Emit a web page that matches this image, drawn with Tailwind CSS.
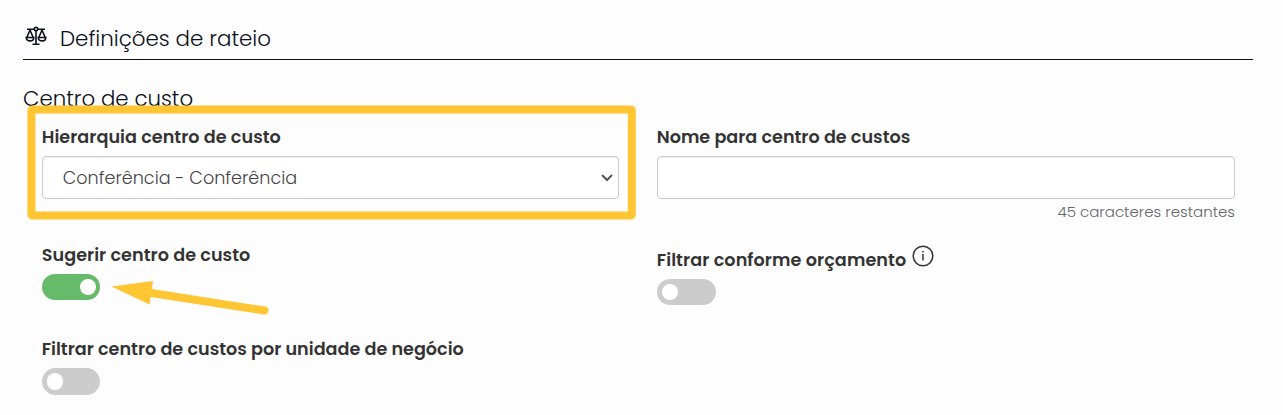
<!DOCTYPE html>
<html lang="pt-BR">
<head>
    <meta charset="UTF-8">
    <meta name="viewport" content="width=device-width, initial-scale=1.0">
    <title>Definições de rateio</title>
    <script src="https://cdn.jsdelivr.net/npm/@tailwindcss/browser@4"></script>
</head>
<body class="bg-[#fdfdfd] font-[Poppins,Inter,sans-serif] text-[#333] overflow-hidden">
    <div class="relative w-[1283px] h-[415px] pl-[23px] pr-[30px]">
        <!-- Cabeçalho -->
        <div class="flex items-center h-[60px] pt-[18px] border-b border-[#0b1020] text-[#0b1020]">
            <svg class="w-[22px] h-[20px] ml-0.5 -mt-1.5 shrink-0" viewBox="0 0 22 20" fill="none" stroke="currentColor" stroke-width="1.6">
                <path d="M2 3.2H9M13 3.2H20M11 5V18M7.5 18.2H14.5" />
                <circle cx="11" cy="3" r="1.7" />
                <path d="M5 4L1.6 12M5 4L8.4 12M17 4L13.6 12M17 4L20.4 12" />
                <path d="M1.2 11.5H8.8C8.8 16 1.2 16 1.2 11.5ZM13.2 11.5H20.8C20.8 16 13.2 16 13.2 11.5Z" />
            </svg>
            <h1 class="ml-[13px] text-[21.4px] leading-[32px] font-light whitespace-nowrap">Definições de rateio</h1>
        </div>

        <h2 class="mt-[23px] h-[41px] text-[21.3px] leading-[32px] font-light text-[#0b1020]">Centro de custo</h2>

        <!-- Campos -->
        <div class="grid grid-cols-2">
            <div class="px-[18.75px] h-[118px]">
                <label class="block h-8 leading-[26px] text-[17.6px] font-semibold tracking-[0.03px] whitespace-nowrap">Hierarquia centro de custo</label>
                <div class="flex items-center justify-between h-[43px] pl-5 pr-[5px] bg-white border border-[#ccc] rounded-[4px] shadow-[inset_0_1px_1px_rgba(0,0,0,0.075)]">
                    <span class="pt-px text-[17.6px] font-light text-[#444]">Conferência - Conferência</span>
                    <svg class="w-[12px] h-[8px]" viewBox="0 0 12 8" fill="none" stroke="#555" stroke-width="2">
                        <path d="M1 1L6 6L11 1" />
                    </svg>
                </div>
            </div>
            <div class="pl-[18.75px] pr-[18px] h-[118px]">
                <label class="block h-8 leading-[26px] text-[17.6px] font-semibold whitespace-nowrap">Nome para centro de custos</label>
                <div class="h-[43px] bg-white border border-[#ccc] rounded-[4px] shadow-[inset_0_1px_1px_rgba(0,0,0,0.075)]"></div>
                <p class="text-right text-[15px] leading-[26px] font-light text-[#666]">45 caracteres restantes</p>
            </div>

            <div class="px-[18.75px] h-[94px]">
                <label class="block h-8 leading-[26px] text-[17.6px] font-semibold tracking-[0.04px] whitespace-nowrap">Sugerir centro de custo</label>
                <div class="flex items-center justify-end w-[58px] h-[26px] px-[4px] rounded-full bg-[#66bb6a]">
                    <span class="w-4 h-4 rounded-full bg-white"></span>
                </div>
            </div>
            <div class="px-[18.75px] h-[94px]">
                <div class="flex h-[37px] pt-[5px]">
                    <label class="leading-[26px] text-[17.6px] font-semibold tracking-[0.08px] whitespace-nowrap">Filtrar conforme orçamento</label>
                    <svg class="w-[22px] h-[22px] ml-1.5 -mt-0.5" viewBox="0 0 22 22" fill="none" stroke="#333" stroke-width="1.5">
                        <circle cx="11" cy="11" r="9.8" />
                        <path d="M11 9V15.5M11 6V7.5" />
                    </svg>
                </div>
                <div class="flex items-center w-[59px] h-[26px] px-[5px] rounded-full bg-[#ccc]">
                    <span class="w-4 h-4 rounded-full bg-white"></span>
                </div>
            </div>

            <div class="px-[18.75px]">
                <label class="block h-8 leading-[26px] text-[17.6px] font-semibold whitespace-nowrap">Filtrar centro de custos por unidade de negócio</label>
                <div class="flex items-center w-[58px] h-[27px] px-[5px] rounded-full bg-[#ccc]">
                    <span class="w-4 h-[17px] rounded-full bg-white"></span>
                </div>
            </div>
        </div>

        <!-- Destaques -->
        <svg class="absolute left-[27px] top-[105px] w-[610px] h-[116px]" viewBox="0 0 610 116" fill="none">
            <rect x="4.4" y="4.4" width="600.4" height="106.2" rx="1" stroke="#ffc533" stroke-width="8" stroke-linejoin="round" />
        </svg>
        <svg class="absolute left-[110px] top-[278px] w-[162px] h-[40px]" viewBox="0 0 162 40">
            <path d="M1.5 8.5L43 3L39.5 26.5Z" fill="#ffc533" />
            <path d="M38 14.5L154.5 32.5" stroke="#ffc533" stroke-width="8" stroke-linecap="round" />
        </svg>
    </div>
</body>
</html>
